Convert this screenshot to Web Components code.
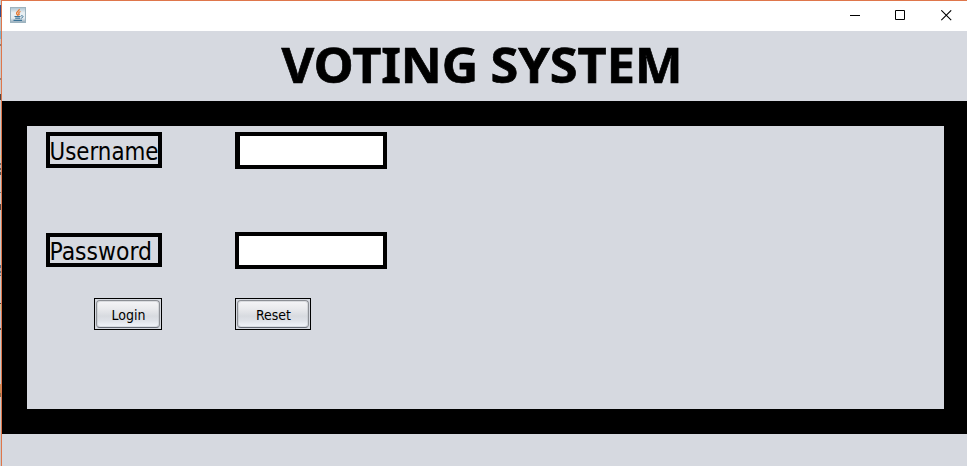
<!DOCTYPE html>
<html lang="en"><head><meta charset="utf-8"><title>Voting System</title>
<style>html,body{margin:0;width:967px;height:466px;overflow:hidden;background:#d6d9e0}</style></head>
<body>
<voting-window>
  <title-bar></title-bar>
  <fit-text style="--w:965px;--h:70px;--stroke:.7px;--word:-1px" size="48.5" weight="700" x="279.500" y="51.500" length="401">VOTING SYSTEM</fit-text>
  <login-panel></login-panel>
</voting-window>
<script>
const define = (name, html, setup) => customElements.define(name, class extends HTMLElement {
  connectedCallback() {
    if (this.shadowRoot) return;
    const t = document.createElement('template');
    t.innerHTML = html;
    this.attachShadow({mode: 'open'}).append(t.content.cloneNode(true));
    if (setup) setup(this);
  }
});

// A single line of text fitted to a given advance width.
define('fit-text', `<style>:host{display:block;width:var(--w,100%);height:var(--h,100%)}
svg{display:block;width:100%;height:100%;overflow:visible}
text{font-family:var(--face,"Noto Sans"),"Open Sans",sans-serif;fill:#000;stroke:#000;stroke-width:var(--stroke,0);word-spacing:var(--word,0)}</style><svg><text></text></svg>`, host => {
  const t = host.shadowRoot.querySelector('text');
  t.textContent = host.textContent.trim();
  t.setAttribute('x', host.getAttribute('x'));
  t.setAttribute('y', host.getAttribute('y'));
  t.setAttribute('font-size', host.getAttribute('size'));
  t.setAttribute('font-weight', host.getAttribute('weight') || 400);
  t.setAttribute('textLength', host.getAttribute('length'));
  t.setAttribute('lengthAdjust', 'spacingAndGlyphs');
});

define('voting-window', `<style>
:host{display:grid;grid-template-columns:1px 1fr;width:967px;height:466px;background:#d6d9e0}
.frame{box-sizing:border-box;height:466px;border-left:1px solid #df764b;border-top:1px solid #df764b}
.edge{background:linear-gradient(#c9cdd0 0 5px,#344e8b 5px 17px,#b9c3c8 17px 31px,#7cb1cc 31px 39px,#c5c6c7 39px 44px,#897b76 44px 46px,#c8c9ca 46px 78px,#8a8582 78px 80px,#c9c9c9 80px 94px,#4b4747 94px 100px,#c8c8c8 100px 155px,#d4cd9c 155px 158px,#c8c8c8 158px 163px,#6b6b6b 163px 165px,#bbb 165px 168px,#666 168px 170px,#bbb 170px 172px,#555 172px 175px,#c8c8c8 175px 192px,#777 192px 193px,#c8c8c8 193px 204px,#4b4747 204px 210px,#c8c8c8 210px 265px,#55718a 265px 268px,#aab1b8 268px 271px,#607383 271px 273px,#b4b8bd 273px 275px,#5c6c7b 275px 276px,#c8c8c8 276px 303px,#533 303px 304px,#c9c69c 304px 311px,#bfc0cc 311px 328px,#555 328px 330px,#c8c8c8 330px 384px,#c98e55 384px 393px,#8e6e4a 393px 397px,#c8c8c8 397px)}
</style><div class="edge"></div><div class="frame"><slot></slot></div>`);

define('java-icon', `<style>:host{display:block;width:16px;height:16px}svg{display:block}</style>
<svg width="16" height="16" viewBox="0 0 16 16" fill="none"><defs><linearGradient id="g" x2="0" y2="1"><stop stop-color="#abc2d0"/><stop offset=".35" stop-color="#eaf0f3"/><stop offset=".7" stop-color="#e6edf1"/><stop offset="1" stop-color="#91a9b8"/></linearGradient></defs>
<rect x=".5" y=".5" width="15" height="15" fill="url(#g)" stroke="#9db3bf"/>
<path d="M9.200 2C9.800 4 6 4.700 6.600 6.600L8 8.700M10.500 4.500C8.500 5.300 8.300 6 9.200 7.200L8.400 8.500" stroke="#e8772e" stroke-width="1.300"/>
<path d="M4.500 9.500H10.500M5.200 11.200H10M3.500 13.400H12" stroke="#3c7397" stroke-width="1.200"/><path d="M11 8.800C14.300 8.300 13.300 11 10.700 11.300" stroke="#477b9c"/></svg>`);

define('title-bar', `<style>
:host{display:flex;box-sizing:border-box;height:30px;padding:6px 15px 0 8px;background:#fff;justify-content:space-between}
.controls{display:flex;gap:35px;padding-top:3px}svg{display:block}
</style><java-icon></java-icon><div class="controls">
<svg width="11" height="11"><path d="M1 5.500H11" stroke="#000"/></svg>
<svg width="11" height="11"><path d="M.5 .5H9.500V9.500H.5Z" fill="none" stroke="#000"/></svg>
<svg width="11" height="11"><path d="M.3 .3L10.200 10.200M10.200 .3L.3 10.200" stroke="#000" stroke-width="1.100"/></svg></div>`);

define('field-label', `<style>:host{display:block;box-sizing:border-box;border:4px solid #000;width:116px;height:var(--box)}</style><slot></slot>`);

define('text-field', `<style>:host{display:block;box-sizing:border-box;border:4px solid #000;border-left-width:var(--left,4px);width:152px;height:37px;background:#fff}
input{display:block;box-sizing:border-box;width:100%;height:100%;border:0;padding:0 4px;outline:0;background:#fff;font:20px "Noto Sans",sans-serif}</style><input aria-label="Entry">`, h => {
  h.shadowRoot.querySelector('input').type = h.getAttribute('type') || 'text';
});

define('nimbus-button', `<style>:host{display:block;box-sizing:border-box;border:1px solid #000;height:32px;padding:1px;width:var(--bw)}
button{display:block;box-sizing:border-box;width:100%;height:28px;padding:0;border:1px solid #8d9096;border-bottom-color:#666b76;border-radius:4px;box-shadow:inset 0 0 0 1px #b5b8be66;background:linear-gradient(#f5f5f7 0,#e9eaed 30%,#d8dbe0 58%,#dfe2e8 75%,#f2f5fb 100%)}</style><button><slot></slot></button>`);

define('login-panel', `<style>
:host{display:block;box-sizing:border-box;height:333px;border:25px solid #000;border-right-width:23px;background:#d6d9e0;--face:"DejaVu Sans Condensed"}
.form{display:grid;grid-template-columns:116px 152px;column-gap:73px;grid-template-rows:100px 66px 32px;padding:6px 0 0 19px;align-items:start}
.second{margin-top:1px}.login{margin-left:48px}
</style><div class="form">
<field-label style="--box:36px"><fit-text size="24" x="-.5" y="24" length="109">Username</fit-text></field-label>
<text-field style="--left:5px"></text-field>
<field-label class="second" style="--box:34px"><fit-text size="24" x="-.5" y="23" length="102.500">Password</fit-text></field-label>
<text-field type="password"></text-field>
<nimbus-button class="login" style="--bw:68px"><fit-text size="14" x="14.500" y="19" length="34">Login</fit-text></nimbus-button>
<nimbus-button style="--bw:76px"><fit-text size="14" x="18" y="19" length="35">Reset</fit-text></nimbus-button>
</div>`);
</script></body></html>
